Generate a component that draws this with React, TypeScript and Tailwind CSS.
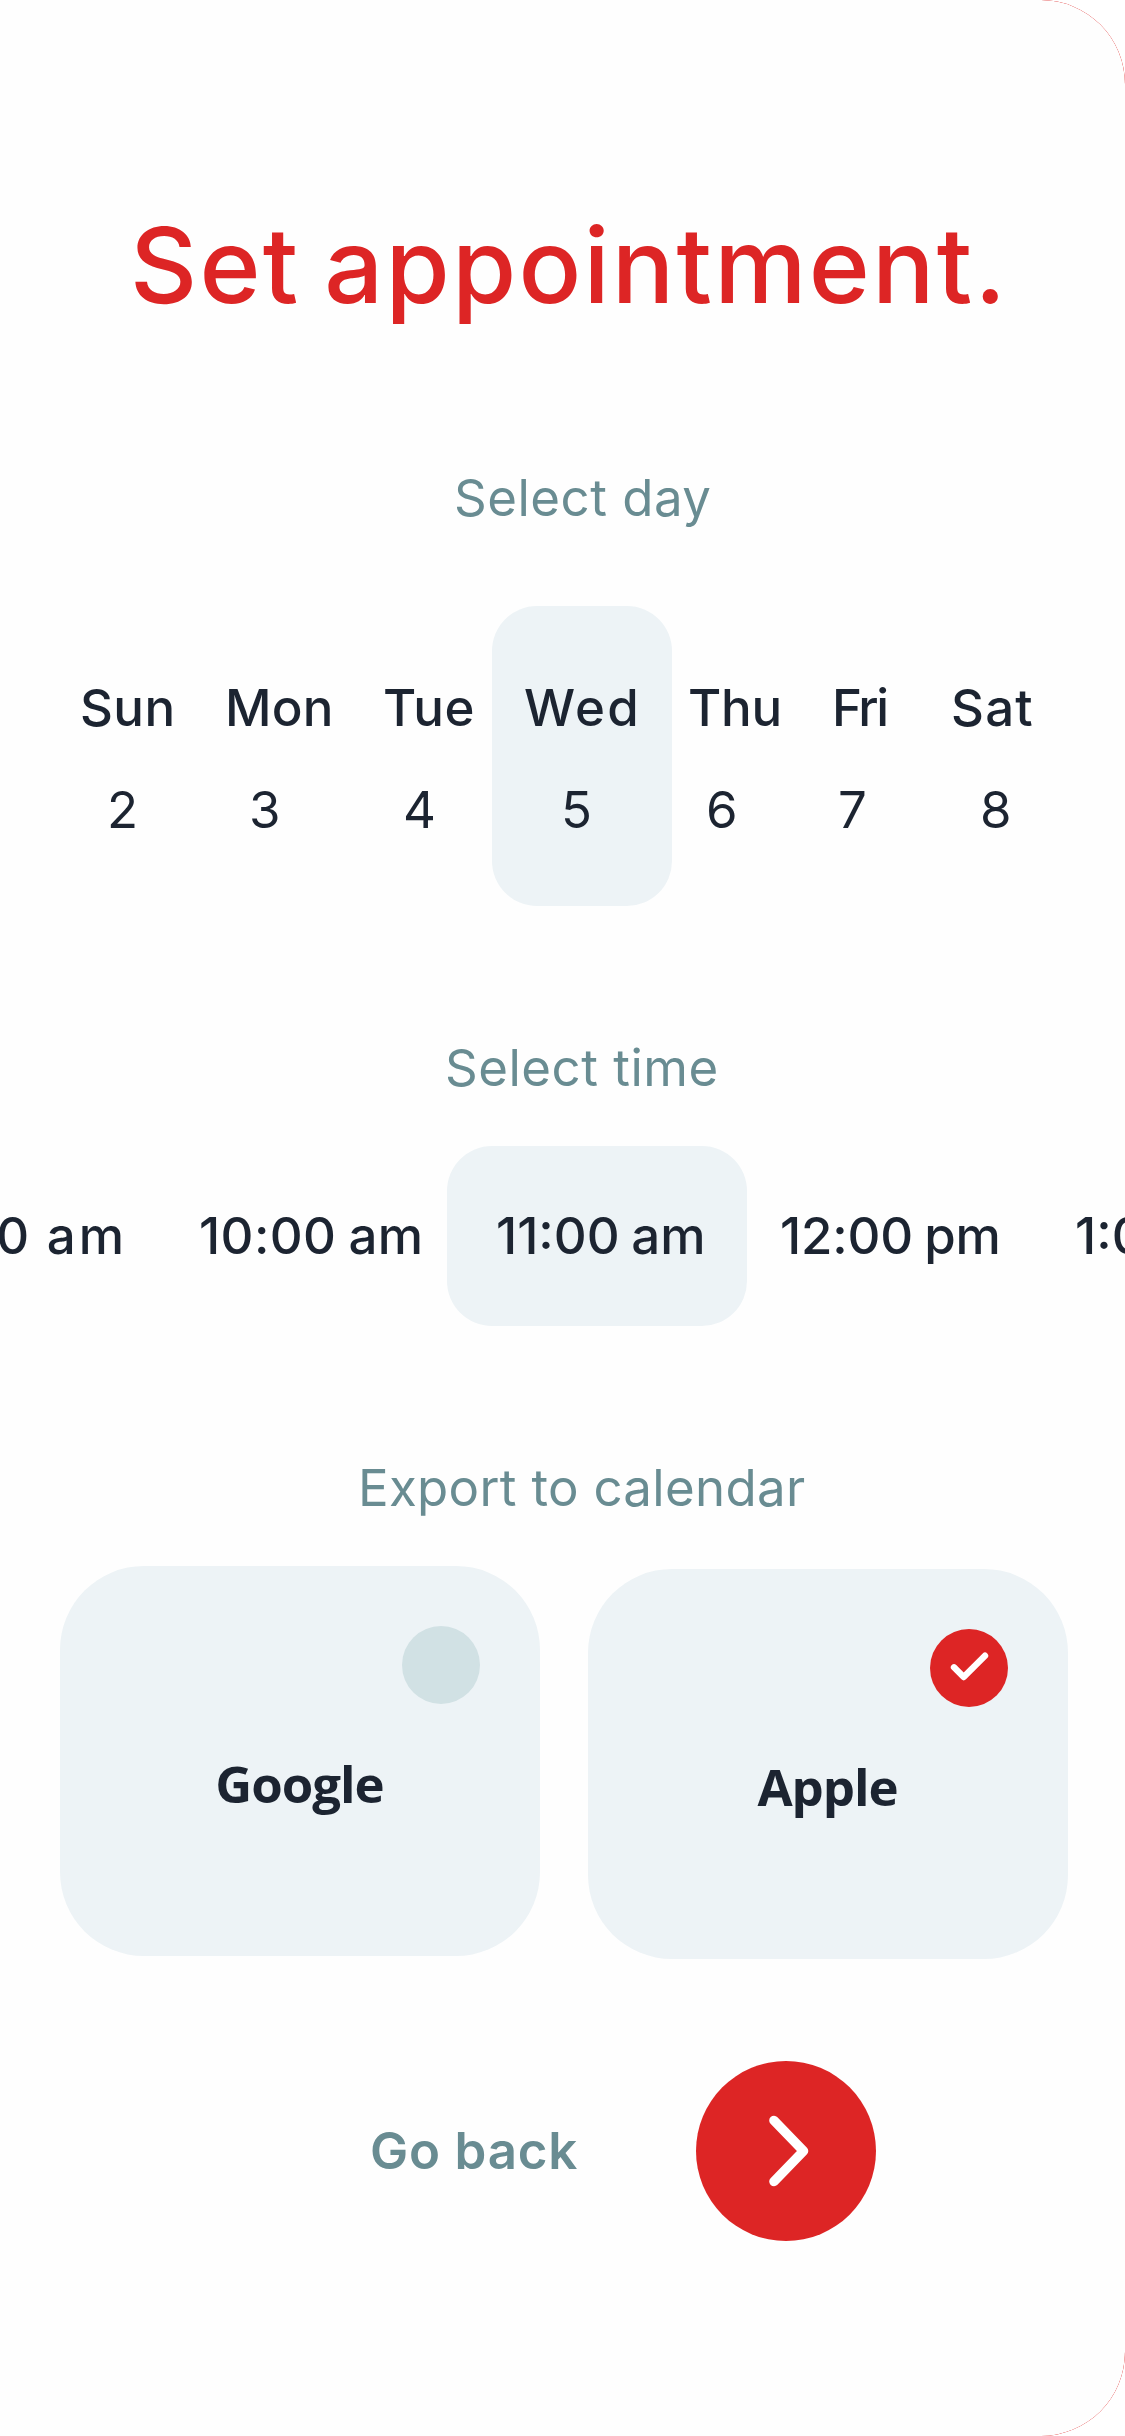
import clsx from 'clsx'
import { useState } from 'react'

interface Day {
    name: string
    date: number
    nameClass: string
    dateClass: string
}

const days: Day[] = [
    { name: 'Sun', date: 2, nameClass: 'tracking-[0.4px]', dateClass: 'pl-[27px]' },
    { name: 'Mon', date: 3, nameClass: 'tracking-[0.2px]', dateClass: 'pl-6' },
    { name: 'Tue', date: 4, nameClass: 'tracking-[0.6px]', dateClass: 'pl-5' },
    { name: 'Wed', date: 5, nameClass: 'pl-8 tracking-[2.4px]', dateClass: 'pl-[69px]' },
    { name: 'Thu', date: 6, nameClass: 'pl-4 tracking-[-0.2px]', dateClass: 'pl-[34px]' },
    { name: 'Fri', date: 7, nameClass: 'pl-px tracking-[-2.4px]', dateClass: 'pl-[7px]' },
    { name: 'Sat', date: 8, nameClass: 'tracking-[1.2px]', dateClass: 'pl-[29px]' },
]

const times = [
    { label: '9:00 am', className: 'w-[127px] justify-end tracking-[3px]' },
    { label: '10:00 am', className: 'w-[320px] pl-[72px] tracking-[0.4px]' },
    { label: '11:00 am', className: 'w-[300px] pl-[49px]' },
    { label: '12:00 pm', className: 'w-[328px] pl-[33px] tracking-[-0.2px]' },
    { label: '1:00 pm', className: 'w-[300px]' },
]

const CheckMark = () => (
    <svg viewBox="0 0 78 78" className="size-full" fill="none" stroke="#fff" strokeWidth="6.4" strokeLinecap="round" strokeLinejoin="round">
        <path d="M24 38.3 L33.7 48 L55 26.7" />
    </svg>
)

interface CalendarCardProps {
    label: string
    checked: boolean
    className?: string
    onClick: () => void
}

const CalendarCard = ({ label, checked, className, onClick }: CalendarCardProps) => {
    return (
        <button
            onClick={onClick}
            className={clsx('flex h-[390px] w-[480px] flex-col rounded-[84px] bg-[#edf3f6] pt-[60px]', className)}
        >
            <span className={clsx('mr-[60px] size-[78px] self-end rounded-full', checked ? 'bg-[#dd2525]' : 'bg-[#d1e1e4]')}>
                {checked && <CheckMark />}
            </span>
            <span className="mt-[49px] w-full pr-px text-center font-['Open_Sans',sans-serif] text-[51px] leading-[60px] font-bold tracking-[-1.05px]">
                {label}
            </span>
        </button>
    )
}

const App = () => {
    const [day, setDay] = useState('Wed')
    const [time, setTime] = useState('11:00 am')
    const [calendar, setCalendar] = useState('Apple')

    return (
        <div className="h-[2436px] w-[1125px] overflow-hidden rounded-r-[84px] bg-[#dd2525]">
            <main className="flex h-full flex-col rounded-r-[84px] bg-[#fefefe] pt-[205px] font-[Inter,sans-serif] text-[51px] leading-[60px] text-[#1c2431]">
                <h1 className="pl-[130px] text-[104px] leading-[120px] font-medium tracking-[2.2px] whitespace-nowrap text-[#dd2525] [word-spacing:-6px]">
                    Set appointment.
                </h1>

                {/* Day */}
                <h2 className="mt-[143px] pl-[454px] tracking-[0.5px] text-[#698c92]">Select day</h2>
                <div className="mt-[78px] grid h-[300px] grid-cols-[145px_158px_109px_180px_159px_120px_1fr] pl-20">
                    {days.map(({ name, date, nameClass, dateClass }) => (
                        <button
                            key={name}
                            onClick={() => setDay(name)}
                            className={clsx('flex flex-col gap-[42px] rounded-[45px] pt-[72px] text-left', day === name && 'bg-[#edf3f6]')}
                        >
                            <span className={clsx('font-medium', nameClass)}>{name}</span>
                            <span className={dateClass}>{date}</span>
                        </button>
                    ))}
                </div>

                {/* Time */}
                <h2 className="mt-[132px] pl-[445px] tracking-[0.5px] text-[#698c92]">Select time</h2>
                <div className="mt-12 flex h-[180px] overflow-hidden font-medium whitespace-nowrap">
                    {times.map(({ label, className }) => (
                        <button
                            key={label}
                            onClick={() => setTime(label)}
                            className={clsx('flex shrink-0 items-center rounded-[45px] [word-spacing:-2px]', className, time === label && 'bg-[#edf3f6]')}
                        >
                            {label}
                        </button>
                    ))}
                </div>

                {/* Calendar */}
                <h2 className="mt-[132px] pl-[358px] tracking-[0.3px] text-[#698c92]">Export to calendar</h2>
                <div className="mt-12 flex gap-12 pl-[60px]">
                    <CalendarCard label="Google" checked={calendar === 'Google'} onClick={() => setCalendar('Google')} />
                    <CalendarCard label="Apple" checked={calendar === 'Apple'} onClick={() => setCalendar('Apple')} className="mt-[3px]" />
                </div>

                <div className="mt-[102px] flex items-center pl-[370px]">
                    <button className="w-[326px] text-left font-semibold tracking-[0.8px] text-[#698c92]">Go back</button>
                    <button className="size-[180px] rounded-full bg-[#dd2525]" aria-label="Next">
                        <svg viewBox="0 0 180 180" className="size-full" fill="none" stroke="#fff" strokeWidth="9.6" strokeLinecap="round" strokeLinejoin="round">
                            <path d="M78 59.5 L107.5 90 L78 120.5" />
                        </svg>
                    </button>
                </div>
            </main>
        </div>
    )
}

export default App
